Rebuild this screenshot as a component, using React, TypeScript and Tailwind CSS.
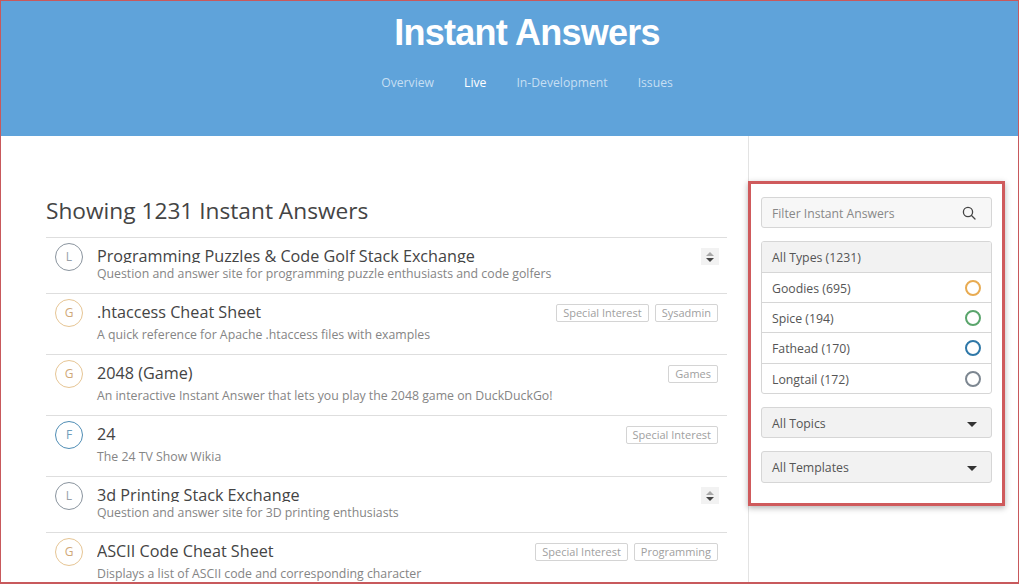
import React from "react";

type Row = {
    letter: string;
    tone: string;
    title: string;
    desc: string;
    tags?: string[];
    clipped?: boolean;
};

const gray = "border-[#8a949e] text-[#98a0a8]";
const gold = "border-[#e6c594] text-[#cfa878]";
const blue = "border-[#4f8db5] text-[#6f9dbb]";

const rows: Row[] = [
    { letter: "L", tone: gray, title: "Programming Puzzles & Code Golf Stack Exchange", desc: "Question and answer site for programming puzzle enthusiasts and code golfers", clipped: true },
    { letter: "G", tone: gold, title: ".htaccess Cheat Sheet", desc: "A quick reference for Apache .htaccess files with examples", tags: ["Special Interest", "Sysadmin"] },
    { letter: "G", tone: gold, title: "2048 (Game)", desc: "An interactive Instant Answer that lets you play the 2048 game on DuckDuckGo!", tags: ["Games"] },
    { letter: "F", tone: blue, title: "24", desc: "The 24 TV Show Wikia", tags: ["Special Interest"] },
    { letter: "L", tone: gray, title: "3d Printing Stack Exchange", desc: "Question and answer site for 3D printing enthusiasts", clipped: true },
    { letter: "G", tone: gold, title: "ASCII Code Cheat Sheet", desc: "Displays a list of ASCII code and corresponding character", tags: ["Special Interest", "Programming"] },
];

const types = [
    { label: "Goodies (695)", ring: "border-[#e8ab52]", h: "h-[30px]", nudge: "pt-[3px]" },
    { label: "Spice (194)", ring: "border-[#5aa56c]", h: "h-[30px]", nudge: "pt-[3px]" },
    { label: "Fathead (170)", ring: "border-[#2f78a8]", h: "h-[31px]", nudge: "pt-[2px]" },
    { label: "Longtail (172)", ring: "border-[#7d8791]", h: "h-[30px]", nudge: "pt-[3px]" },
];

const SortToggle = () => (
    <span className="-mr-px flex h-[17px] w-[18px] items-center justify-center bg-[#f2f2f2]">
        <svg width="10" height="12" viewBox="0 0 10 12">
            <path d="M5 1l4 4H1z" fill="#a8a8a8" />
            <path d="M5 11L1 7h8z" fill="#444" />
        </svg>
    </span>
);

const Caret = () => (
    <svg width="10" height="5" viewBox="0 0 10 5">
        <path d="M0 0h10L5 5z" fill="#333" />
    </svg>
);

const ListRow = ({ row }: { row: Row }) => (
    <div className={`flex border-t border-[#dedede] pl-[9px] pr-[9px] ${row.clipped ? "h-[56px]" : "h-[61px]"}`}>
        <div className={`mt-[5px] flex h-[28px] w-[28px] shrink-0 items-center justify-center rounded-full border text-[12px] ${row.tone}`}>
            {row.letter}
        </div>
        <div className="ml-[14px] min-w-0 flex-1">
            <div className={`mt-[6px] overflow-hidden text-[16.2px] text-[#444] ${row.clipped ? "h-[19px] leading-[24px]" : "h-[25px] leading-[25px]"}`}>
                {row.title}
            </div>
            <div className={`text-[12.3px] leading-[18px] text-[#858585] ${row.clipped ? "mt-[2px]" : "mt-[1px]"}`}>{row.desc}</div>
        </div>
        <div className="mt-[10px] flex h-[18px] shrink-0 items-start justify-end gap-[6px]">
            {row.clipped && <SortToggle />}
            {row.tags?.map((tag) => (
                <span key={tag} className="rounded-[2px] border border-[#d4d4d4] px-[6px] text-[11px] leading-[16px] text-[#a0a0a0]">
                    {tag}
                </span>
            ))}
        </div>
    </div>
);

const Dropdown = ({ label, className, textClass }: { label: string; className: string; textClass: string }) => (
    <div className={`flex items-center justify-between rounded-[3px] border border-[#d6d6d6] bg-[#f2f2f2] pl-[10px] pr-[14px] text-[12.3px] text-[#555] ${className}`}>
        <span className={textClass}>{label}</span>
        <span className={textClass}>
            <Caret />
        </span>
    </div>
);

export default function App() {
    return (
        <div className="h-[584px] w-[1019px] overflow-hidden border border-b-2 border-[#c8595c] bg-white [font-family:'Open_Sans',sans-serif]">
            <header className="h-[135px] bg-[#5fa3da] pl-[35px] text-center">
                <h1 className="pt-[10px] text-[36px] font-bold leading-[44px] tracking-[-0.75px] text-white [font-family:'Liberation_Sans',sans-serif]">
                    Instant Answers
                </h1>
                <nav className="mt-[18px] flex justify-center gap-[30px] text-[12.2px] leading-[20px] text-[#c6dff3]">
                    <span>Overview</span>
                    <span className="text-white">Live</span>
                    <span>In-Development</span>
                    <span>Issues</span>
                </nav>
            </header>

            <main className="flex h-[448px]">
                <section className="ml-[45px] w-[681px] pt-[59px]">
                    <h2 className="mb-[10px] text-[22.7px] leading-[32px] text-[#444]">Showing 1231 Instant Answers</h2>
                    {rows.map((row) => (
                        <ListRow key={row.title} row={row} />
                    ))}
                </section>

                <aside className="ml-[21px] flex-1 border-l border-[#e3e3e3] pt-[45px]">
                    <div className="-ml-px h-[325px] w-[257px] border-[3px] border-[#cf5a5c] bg-white pl-[10px] pr-[10px] pt-[13px] shadow-[0_2px_6px_rgba(0,0,0,0.3)]">
                        <div className="flex h-[31px] w-[231px] items-center justify-between rounded-[3px] border border-[#d6d6d6] bg-[#f7f7f7] pl-[10px] pr-[15px] text-[12.2px] text-[#888]">
                            <span className="pt-[3px]">Filter Instant Answers</span>
                            <svg width="14" height="14" viewBox="0 0 14 14" fill="none" stroke="#444" strokeWidth="1.3" strokeLinecap="round">
                                <circle cx="6" cy="6" r="4.6" />
                                <path d="M9.5 9.5L13 13" />
                            </svg>
                        </div>

                        <div className="mt-[13px] w-[231px] overflow-hidden rounded-[3px] border border-[#d6d6d6] text-[12.3px] text-[#555]">
                            <div className="flex h-[30px] items-center bg-[#f2f2f2] pl-[10px]">
                                <span className="pt-[2px]">All Types (1231)</span>
                            </div>
                            {types.map((t) => (
                                <div key={t.label} className={`flex items-center justify-between border-t border-[#d6d6d6] pl-[10px] pr-[10px] ${t.h}`}>
                                    <span className={t.nudge}>{t.label}</span>
                                    <span className={`h-[16px] w-[16px] rounded-full border-2 ${t.ring}`} />
                                </div>
                            ))}
                        </div>

                        <Dropdown label="All Topics" className="mt-[13px] h-[31px] w-[231px]" textClass="pt-[3px]" />
                        <Dropdown label="All Templates" className="mt-[13px] h-[32px] w-[231px]" textClass="pt-[3px]" />
                    </div>
                </aside>
            </main>
        </div>
    );
}
